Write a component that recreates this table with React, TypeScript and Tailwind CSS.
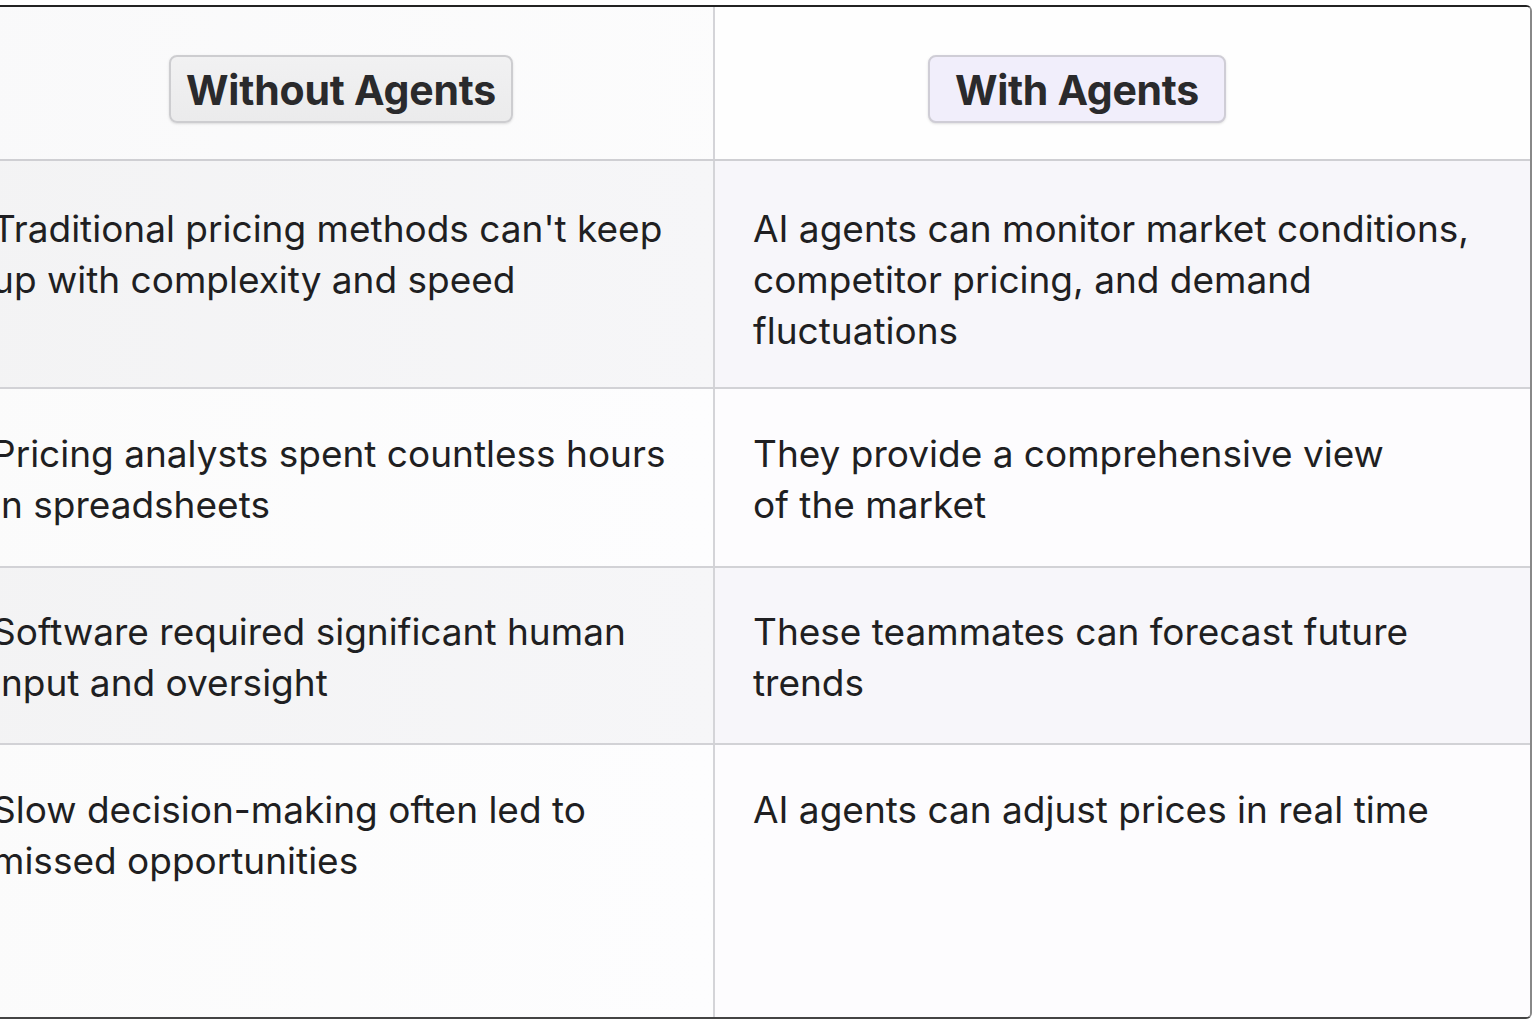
const ROWS = [
  {
    without: "Traditional pricing methods can't keep up with complexity and speed",
    withA: 'AI agents can monitor market conditions, competitor pricing, and demand fluctuations',
    h: 'h-[228px]',
    pt: 'pt-[42px]',
    tint: true,
  },
  {
    without: 'Pricing analysts spent countless hours in spreadsheets',
    withA: 'They provide a comprehensive view of the market',
    h: 'h-[179px]',
    pt: 'pt-[39px]',
    tint: false,
  },
  {
    without: 'Software required significant human input and oversight',
    withA: 'These teammates can forecast future trends',
    h: 'h-[177px]',
    pt: 'pt-[38px]',
    tint: true,
  },
  {
    without: 'Slow decision-making often led to missed opportunities',
    withA: 'AI agents can adjust prices in real time',
    h: 'flex-1',
    pt: 'pt-[39px]',
    tint: false,
  },
];

export default function App() {
  return (
    <div className="w-[1536px] h-[1024px] overflow-hidden bg-white" style={{ fontFamily: 'Inter, "Noto Sans", sans-serif' }}>
      <div className="ml-[-50px] mt-[5px] w-[1582px] h-[1014px] flex flex-col border-2 border-t-[#222] border-r-[#888] border-b-[#444] border-l-[#888] rounded-md overflow-hidden text-[#1f1f22]">
        {/* header */}
        <div className="grid grid-cols-[763px_1fr] h-[154px] border-b-2 border-[#cfcfd3] bg-gradient-to-r from-[#f9f9fa] to-white">
          <div className="border-r-2 border-[#d4d4d8] pl-[217px] pt-[48px]">
            <span className="inline-block px-[15px] h-[68px] leading-[66px] bg-gradient-to-b from-[#f1f1f2] to-[#ebebec] border-2 border-[#cdcdd0] rounded-lg shadow-sm text-[41px] font-bold text-[#2a2a2c] tracking-[-0.2px]">
              Without Agents
            </span>
          </div>
          <div className="pl-[213px] pt-[48px] bg-[#fefefe]">
            <span className="inline-block px-[25px] h-[68px] leading-[66px] bg-[#f1eefb] border-2 border-[#cfcdd6] rounded-lg shadow-sm text-[41px] font-bold text-[#2a2a2c] tracking-[-0.3px]">
              With Agents
            </span>
          </div>
        </div>
        {ROWS.map((r, i) => (
          <div
            key={i}
            className={`grid grid-cols-[763px_1fr] ${r.h} ${i < ROWS.length - 1 ? 'border-b-2 border-[#d2d2d6]' : ''}`}
          >
            <div
              className={`border-r-2 border-[#d4d4d8] pl-[40px] pr-[30px] ${r.pt} text-[37px] leading-[51px] ${
                r.tint ? 'bg-gradient-to-r from-[#f3f3f4] to-[#f6f6f8]' : 'bg-gradient-to-r from-[#fbfbfb] to-[#fdfdfe]'
              }`}
            >
              <p className="max-w-[700px]">{r.without}</p>
            </div>
            <div
              className={`pl-[38px] pr-[30px] ${r.pt} text-[37px] leading-[51px] ${
                r.tint ? 'bg-[#f7f6fa]' : 'bg-[#fdfcfe]'
              }`}
            >
              <p className={i === 1 ? 'max-w-[660px]' : 'max-w-[740px]'}>{r.withA}</p>
            </div>
          </div>
        ))}
      </div>
    </div>
  );
}
